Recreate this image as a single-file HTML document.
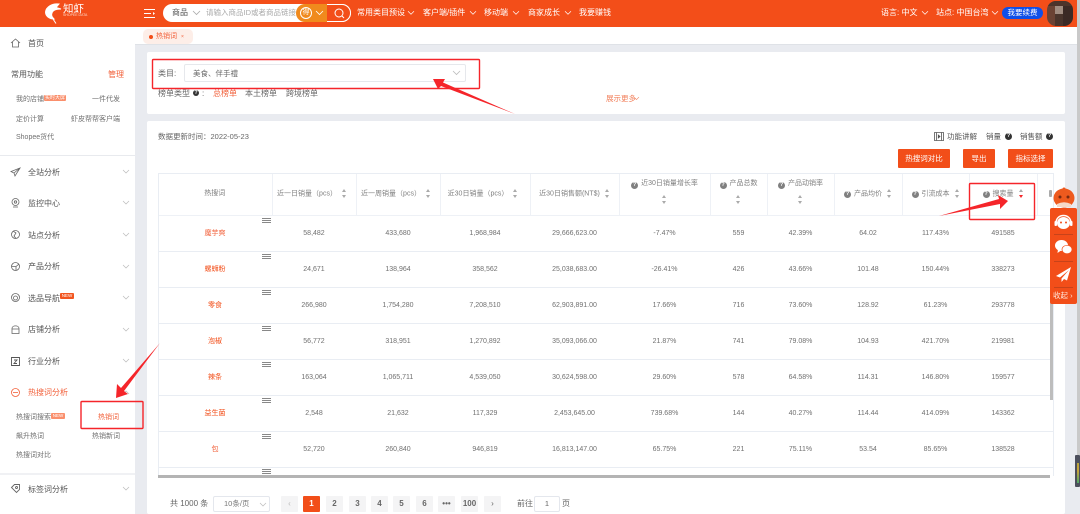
<!DOCTYPE html>
<html lang="zh-CN"><head><meta charset="utf-8"><title>热销词</title>
<style>
*{box-sizing:border-box}
html,body{margin:0;padding:0;width:1080px;height:514px;overflow:hidden;background:#fff}
body{position:relative;font-family:"Liberation Sans","Noto Sans CJK SC",sans-serif;font-size:7.5px;color:#555}
.a{position:absolute;white-space:nowrap;line-height:10px}
.b{position:absolute}
#wrap{position:absolute;left:0;top:0;width:1080px;height:514px;filter:blur(.3px)}
.h{color:#fff;top:8px;font-size:8px}
.m{left:28px;font-size:8px;color:#555}
.s{font-size:7px;color:#707070}
.o{color:#f24e19}
svg{position:absolute;overflow:visible}
.chev{fill:none;stroke:currentColor;stroke-width:.8}
table{position:absolute;left:158px;top:173px;width:895px;height:302px;border-collapse:collapse;table-layout:fixed;font-size:7px;color:#707070;text-align:center}
td,th{padding:0;font-weight:normal;line-height:10px}
th{height:42px;border-right:1px solid #eef1f6;border-bottom:1px solid #eef1f6;font-size:7px;color:#808080;white-space:nowrap}
th.p{padding-right:4px}
th.two{padding-bottom:4px}
th.two .sort{display:block;margin:6px auto 0}
td{height:36px;border-bottom:1px solid #e9edf3;padding-top:2px}
tr.e td{height:8px;border-bottom:0;padding:0}
td.k{color:#f24e19}
.sort{display:inline-block;width:5px;height:9px;margin-left:5px;vertical-align:middle;position:relative}
.sort:before,.sort:after{content:"";position:absolute;left:0;border-left:2.5px solid transparent;border-right:2.5px solid transparent}
.sort:before{top:0;border-bottom:3px solid #aaa}
.sort:after{bottom:0;border-top:3px solid #aaa}
.sort.r:after{border-top-color:#f5252a}
.q{display:inline-block;width:7px;height:7px;border-radius:50%;background:#808080;margin-right:3px;vertical-align:-.5px;color:#fff;font-size:5.5px;line-height:7px;font-style:normal;font-weight:bold;text-align:center}
.qd{position:absolute;width:7px;height:7px;border-radius:50%;background:#333;color:#fff;font-size:5.5px;line-height:7px;font-weight:bold;text-align:center}
.ham{position:absolute;left:262px;width:9px;height:5px;border-top:1px solid #888;border-bottom:1px solid #888}
.ham:after{content:"";position:absolute;left:0;right:0;top:1px;height:1px;background:#888}
.pg{position:absolute;top:496px;width:17px;height:16px;background:#f4f4f5;color:#666;font-size:8px;font-weight:bold;text-align:center;line-height:15px;border-radius:1px}
.btn{position:absolute;top:149px;height:19px;background:#f24e19;color:#fff;font-size:7.5px;text-align:center;line-height:19px;border-radius:1px}
</style></head>
<body><div id="wrap">

<!-- page bg -->
<div class="b" style="left:135px;top:27px;width:945px;height:487px;background:#e9ebf0"></div>
<div class="b" style="left:135px;top:27px;width:942px;height:18px;background:#fff;border-bottom:1px solid #dfe2e7"></div>
<div class="b" style="left:1077px;top:0;width:3px;height:455px;background:#c9c9c9"></div>

<!-- header -->
<div class="b" style="left:0;top:0;width:1077px;height:27px;background:#f34e19"></div>
<svg style="left:44px;top:2px" width="20" height="24" viewBox="0 0 20 24"><path d="M15 2C8 1 2 5 1.500 10C1.500 14 5 17 10 17C8 15 7 13 8 11C9 8 13 7 17 7L12 5.500L15 2ZM9 17L12 21.500" fill="#fff" stroke="#fff" stroke-width="1"/></svg>
<span class="a" style="left:63px;top:3px;color:#fff;font-size:10.500px;line-height:12px">知虾</span>
<span class="a" style="left:63px;top:13px;color:#ffd9c8;font-size:3.500px;line-height:4px">SHOPEE DATA</span>
<svg style="left:144px;top:9px" width="11" height="9" viewBox="0 0 11 9"><path d="M0 .5H11M0 4.500H7M0 8.500H11" stroke="#fff" stroke-width="1"/><path d="M9 3L11 4.500L9 6Z" fill="#fff"/></svg>
<div class="b" style="left:163px;top:4px;width:188px;height:18px;background:#fff;border-radius:9px"></div>
<span class="a" style="left:172px;top:8px;font-size:8px;color:#555">商品</span>
<svg class="chev" style="left:193px;top:11px;color:#aaa" width="7" height="4" viewBox="0 0 7 4"><path d="M0 0L3.500 3.500L7 0"/></svg>
<span class="a" style="left:206px;top:8px;font-size:7.500px;color:#aaa">请输入商品ID或者商品链接</span>
<div class="b" style="left:296px;top:4px;width:31px;height:18px;background:#f08a1d;border-radius:9px 0 0 9px"></div>
<div class="b" style="left:300px;top:7px;width:12px;height:12px;border:1px solid #fff;border-radius:50%;color:#fff;font-size:7px;line-height:10px;text-align:center">得</div>
<svg class="chev" style="left:316px;top:11px;color:#fff" width="7" height="4" viewBox="0 0 7 4"><path d="M0 0L3.500 3.500L7 0"/></svg>
<div class="b" style="left:327px;top:4px;width:24px;height:18px;background:#f34e19;border:1px solid #fff;border-left:0;border-radius:0 9px 9px 0"></div>
<svg style="left:334px;top:8px" width="11" height="11" viewBox="0 0 11 11" fill="none" stroke="#fff"><circle cx="5" cy="5" r="4"/><path d="M8 8L10 10"/></svg>
<span class="a h" style="left:357px">常用类目预设</span>
<svg class="chev" style="left:408px;top:11px;color:#fff" width="6" height="4" viewBox="0 0 7 4"><path d="M0 0L3.500 3.500L7 0"/></svg>
<span class="a h" style="left:423px">客户端/插件</span>
<svg class="chev" style="left:470px;top:11px;color:#fff" width="6" height="4" viewBox="0 0 7 4"><path d="M0 0L3.500 3.500L7 0"/></svg>
<span class="a h" style="left:484px">移动端</span>
<svg class="chev" style="left:513px;top:11px;color:#fff" width="6" height="4" viewBox="0 0 7 4"><path d="M0 0L3.500 3.500L7 0"/></svg>
<span class="a h" style="left:528px">商家成长</span>
<svg class="chev" style="left:565px;top:11px;color:#fff" width="6" height="4" viewBox="0 0 7 4"><path d="M0 0L3.500 3.500L7 0"/></svg>
<span class="a h" style="left:579px">我要赚钱</span>
<span class="a h" style="left:881px">语言: 中文</span>
<svg class="chev" style="left:922px;top:11px;color:#fff" width="6" height="4" viewBox="0 0 7 4"><path d="M0 0L3.500 3.500L7 0"/></svg>
<span class="a h" style="left:936px">站点: 中国台湾</span>
<svg class="chev" style="left:992px;top:11px;color:#fff" width="6" height="4" viewBox="0 0 7 4"><path d="M0 0L3.500 3.500L7 0"/></svg>
<div class="b" style="left:1002px;top:7px;width:41px;height:12px;background:#0f4fe8;border-radius:6px;color:#fff;font-size:7.500px;line-height:12px;text-align:center">我要续费</div>
<div class="b" style="left:1047px;top:1px;width:26px;height:25px;border-radius:9px;background:#6b4334;overflow:hidden">
<div class="b" style="left:8px;top:5px;width:8px;height:8px;background:#a08c80"></div>
<div class="b" style="left:8px;top:13px;width:8px;height:12px;background:#4a352c"></div>
<div class="b" style="left:16px;top:5px;width:10px;height:20px;background:#3b2a25"></div>
<div class="b" style="left:0;top:0;width:26px;height:5px;background:#4c342b"></div>
</div>

<!-- sidebar -->
<div class="b" style="left:0;top:27px;width:135px;height:487px;background:#fff"></div>
<div class="b" style="left:0;top:155px;width:135px;height:1px;background:#e8eaee"></div>
<div class="b" style="left:0;top:473px;width:135px;height:2px;background:#f0f1f4"></div>
<svg style="left:11px;top:39px" width="9" height="8" viewBox="0 0 9 8" fill="none" stroke="#666" stroke-width=".8"><path d="M0 4L4.500 0L9 4M1.500 3V8H7.500V3"/></svg>
<span class="a m" style="top:39px">首页</span>
<span class="a" style="left:11px;top:70px;font-size:8px;color:#555">常用功能</span>
<span class="a o" style="left:108px;top:70px;font-size:8px;color:#f2603a">管理</span>
<span class="a s" style="left:16px;top:95px">我的店铺</span><div class="b" style="left:44px;top:95px;width:22px;height:6px;background:#fa8f6c;border-radius:1px;color:#fff;font-size:5px;line-height:6px;text-align:center">实时大屏</div>
<span class="a s" style="left:92px;top:95px">一件代发</span>
<span class="a s" style="left:16px;top:115px">定价计算</span>
<span class="a s" style="left:71px;top:115px">虾皮帮帮客户端</span>
<span class="a s" style="left:16px;top:133px">Shopee货代</span>

<svg style="left:11px;top:168px" width="9" height="8" viewBox="0 0 9 8" fill="none" stroke="#666" stroke-width=".8"><path d="M9 0L0 3.500L3 5L4 8L9 0ZM3 5L9 0"/></svg>
<span class="a m" style="top:168px">全站分析</span>
<svg style="left:11px;top:198px" width="9" height="10" viewBox="0 0 9 10" fill="none" stroke="#666" stroke-width=".8"><circle cx="4.500" cy="4" r="3.500"/><circle cx="4.500" cy="4" r="1.200"/><path d="M2 9H7"/></svg>
<span class="a m" style="top:199px">监控中心</span>
<svg style="left:11px;top:230px" width="9" height="9" viewBox="0 0 9 9" fill="none" stroke="#666" stroke-width=".8"><circle cx="4.500" cy="4.500" r="4"/><path d="M2 1L5 3L3 6L5 8.500"/></svg>
<span class="a m" style="top:231px">站点分析</span>
<svg style="left:11px;top:262px" width="9" height="9" viewBox="0 0 9 9" fill="none" stroke="#666" stroke-width=".8"><circle cx="4.500" cy="4.500" r="4"/><path d="M.5 4.500H5L8 2M5 4.500V8.500"/></svg>
<span class="a m" style="top:262px">产品分析</span>
<svg style="left:11px;top:293px" width="9" height="9" viewBox="0 0 9 9" fill="none" stroke="#666" stroke-width=".8"><circle cx="4.500" cy="4.500" r="4"/><circle cx="4.500" cy="5" r="2"/></svg>
<span class="a m" style="top:294px">选品导航</span><div class="b" style="left:60px;top:293px;width:14px;height:6px;background:#f2551f;border-radius:1px;color:#fff;font-size:4.500px;line-height:6px;text-align:center">NEW</div>
<svg style="left:11px;top:325px" width="9" height="9" viewBox="0 0 9 9" fill="none" stroke="#666" stroke-width=".8"><path d="M1 3.500C1 0 8 0 8 3.500V8.500H1V3.500ZM1 4H8"/></svg>
<span class="a m" style="top:325px">店铺分析</span>
<svg style="left:11px;top:357px" width="9" height="9" viewBox="0 0 9 9" fill="none" stroke="#555" stroke-width=".9"><path d="M.5.5H8.500V8.500H.5ZM3 3H6L3 6.500H6"/></svg>
<span class="a m" style="top:357px">行业分析</span>
<svg style="left:11px;top:388px" width="9" height="9" viewBox="0 0 9 9" fill="none" stroke="#f2603a" stroke-width=".8"><circle cx="4.500" cy="4.500" r="4"/><path d="M2 4.500H7"/></svg>
<span class="a m o" style="top:388px;color:#f2603a">热搜词分析</span>
<span class="a s" style="left:16px;top:413px">热搜词搜索</span><div class="b" style="left:51px;top:413px;width:14px;height:6px;background:#fa8f6c;border-radius:1px;color:#fff;font-size:4.500px;line-height:6px;text-align:center">NEW</div>
<span class="a s" style="left:98px;top:413px;color:#f2603a">热销词</span>
<span class="a s" style="left:16px;top:432px">飙升热词</span>
<span class="a s" style="left:92px;top:432px">热销新词</span>
<span class="a s" style="left:16px;top:451px">热搜词对比</span>
<svg style="left:11px;top:484px" width="9" height="9" viewBox="0 0 9 9" fill="none" stroke="#666" stroke-width=".9"><path d="M.5 3.500L3.500.5H8.500V5.500L5.500 8.500Z"/><circle cx="5.500" cy="3.500" r="1"/></svg>
<span class="a m" style="top:485px">标签词分析</span>
<svg class="chev" style="left:123px;top:170px;color:#bbb" width="6" height="3.500" viewBox="0 0 7 4"><path d="M0 0L3.500 3.500L7 0"/></svg>
<svg class="chev" style="left:123px;top:201px;color:#bbb" width="6" height="3.500" viewBox="0 0 7 4"><path d="M0 0L3.500 3.500L7 0"/></svg>
<svg class="chev" style="left:123px;top:233px;color:#bbb" width="6" height="3.500" viewBox="0 0 7 4"><path d="M0 0L3.500 3.500L7 0"/></svg>
<svg class="chev" style="left:123px;top:265px;color:#bbb" width="6" height="3.500" viewBox="0 0 7 4"><path d="M0 0L3.500 3.500L7 0"/></svg>
<svg class="chev" style="left:123px;top:296px;color:#bbb" width="6" height="3.500" viewBox="0 0 7 4"><path d="M0 0L3.500 3.500L7 0"/></svg>
<svg class="chev" style="left:123px;top:328px;color:#bbb" width="6" height="3.500" viewBox="0 0 7 4"><path d="M0 0L3.500 3.500L7 0"/></svg>
<svg class="chev" style="left:123px;top:359px;color:#bbb" width="6" height="3.500" viewBox="0 0 7 4"><path d="M0 0L3.500 3.500L7 0"/></svg>
<svg class="chev" style="left:123px;top:391px;color:#bbb" width="6" height="3.500" viewBox="0 0 7 4"><path d="M0 3.500L3.500 0L7 3.500"/></svg>
<svg class="chev" style="left:123px;top:487px;color:#bbb" width="6" height="3.500" viewBox="0 0 7 4"><path d="M0 0L3.500 3.500L7 0"/></svg>

<!-- tab -->
<div class="b" style="left:143px;top:29px;width:50px;height:15px;background:#fdeee8;border-radius:5px"></div>
<div class="b" style="left:149px;top:35px;width:4px;height:4px;background:#f24e19;border-radius:50%"></div>
<span class="a" style="left:156px;top:32px;font-size:7px;color:#f2603a">热销词</span>
<span class="a" style="left:181px;top:32px;font-size:5px;color:#f2603a">×</span>

<!-- card 1 -->
<div class="b" style="left:147px;top:52px;width:918px;height:62px;background:#fff;border-radius:2px"></div>
<span class="a" style="left:158px;top:69px;font-size:8px;color:#666">类目:</span>
<div class="b" style="left:184px;top:64px;width:282px;height:18px;border:1px solid #e6e8ec;border-radius:2px"></div>
<span class="a" style="left:193px;top:69px;font-size:7.500px;color:#666">美食、伴手禮</span>
<svg class="chev" style="left:453px;top:71px;color:#bbb" width="7" height="4" viewBox="0 0 7 4"><path d="M0 0L3.500 3.500L7 0"/></svg>
<span class="a" style="left:158px;top:89px;font-size:8px;color:#666">榜单类型</span>
<div class="qd" style="left:193px;top:90px;width:6px;height:6px;line-height:6px;font-size:5px">?</div>
<span class="a" style="left:202px;top:89px;font-size:8px;color:#666">:</span>
<span class="a" style="left:213px;top:89px;font-size:8px;color:#f2603a">总榜单</span>
<span class="a" style="left:245px;top:89px;font-size:8px;color:#666">本土榜单</span>
<span class="a" style="left:286px;top:89px;font-size:8px;color:#666">跨境榜单</span>
<span class="a" style="left:606px;top:94px;font-size:7.500px;color:#f2805c">展示更多</span>
<svg class="chev" style="left:634px;top:97px;color:#f2805c" width="5" height="3" viewBox="0 0 7 4"><path d="M0 0L3.500 3.500L7 0"/></svg>

<!-- card 2 -->
<div class="b" style="left:147px;top:121px;width:918px;height:393px;background:#fff;border-radius:2px"></div>
<span class="a" style="left:158px;top:132px;font-size:7.500px;color:#666">数据更新时间：2022-05-23</span>
<svg style="left:934px;top:132px" width="10" height="9" viewBox="0 0 10 9" fill="none" stroke="#555" stroke-width=".8"><path d="M.5.5H9.500V8.500H.5ZM2.500.5V8.500M7.500.5V8.500"/><path d="M4.300 3L6 4.500L4.300 6Z" fill="#555"/></svg>
<span class="a" style="left:947px;top:132px;font-size:7.500px;color:#555">功能讲解</span>
<span class="a" style="left:986px;top:132px;font-size:7.500px;color:#555">销量</span>
<div class="qd" style="left:1005px;top:133px">?</div>
<span class="a" style="left:1020px;top:132px;font-size:7.500px;color:#555">销售额</span>
<div class="qd" style="left:1046px;top:133px">?</div>
<div class="btn" style="left:898px;width:52px">热搜词对比</div>
<div class="btn" style="left:963px;width:32px">导出</div>
<div class="btn" style="left:1008px;width:45px">指标选择</div>

<!-- table -->
<table>
<colgroup><col style="width:114px"><col style="width:84px"><col style="width:84px"><col style="width:90px"><col style="width:89px"><col style="width:91px"><col style="width:57px"><col style="width:67px"><col style="width:68px"><col style="width:67px"><col style="width:68px"><col style="width:16px"></colgroup>
<thead><tr>
<th>热搜词</th>
<th class="p">近一日销量（pcs）<i class="sort"></i></th>
<th class="p">近一周销量（pcs）<i class="sort"></i></th>
<th class="p">近30日销量（pcs）<i class="sort"></i></th>
<th>近30日销售额(NT$)<i class="sort"></i></th>
<th class="two"><i class="q">?</i>近30日销量增长率<i class="sort"></i></th>
<th class="two"><i class="q">?</i>产品总数<i class="sort"></i></th>
<th class="two"><i class="q">?</i>产品动销率<i class="sort"></i></th>
<th><i class="q">?</i>产品均价<i class="sort"></i></th>
<th><i class="q">?</i>引流成本<i class="sort"></i></th>
<th><i class="q">?</i>搜索量<i class="sort r"></i></th>
<th style="border-right:0"></th>
</tr></thead>
<tbody>
<tr><td class="k" style="color:#f2603a">魔芋爽</td><td>58,482</td><td>433,680</td><td>1,968,984</td><td>29,666,623.00</td><td>-7.47%</td><td>559</td><td>42.39%</td><td>64.02</td><td>117.43%</td><td>491585</td><td></td></tr>
<tr><td class="k">螺蛳粉</td><td>24,671</td><td>138,964</td><td>358,562</td><td>25,038,683.00</td><td>-26.41%</td><td>426</td><td>43.66%</td><td>101.48</td><td>150.44%</td><td>338273</td><td></td></tr>
<tr><td class="k">零食</td><td>266,980</td><td>1,754,280</td><td>7,208,510</td><td>62,903,891.00</td><td>17.66%</td><td>716</td><td>73.60%</td><td>128.92</td><td>61.23%</td><td>293778</td><td></td></tr>
<tr><td class="k">泡椒</td><td>56,772</td><td>318,951</td><td>1,270,892</td><td>35,093,066.00</td><td>21.87%</td><td>741</td><td>79.08%</td><td>104.93</td><td>421.70%</td><td>219981</td><td></td></tr>
<tr><td class="k">辣条</td><td>163,064</td><td>1,065,711</td><td>4,539,050</td><td>30,624,598.00</td><td>29.60%</td><td>578</td><td>64.58%</td><td>114.31</td><td>146.80%</td><td>159577</td><td></td></tr>
<tr><td class="k">益生菌</td><td>2,548</td><td>21,632</td><td>117,329</td><td>2,453,645.00</td><td>739.68%</td><td>144</td><td>40.27%</td><td>114.44</td><td>414.09%</td><td>143362</td><td></td></tr>
<tr><td class="k" style="color:#f2603a">包</td><td>52,720</td><td>260,840</td><td>946,819</td><td>16,813,147.00</td><td>65.75%</td><td>221</td><td>75.11%</td><td>53.54</td><td>85.65%</td><td>138528</td><td></td></tr>
<tr class="e"><td colspan="12"></td></tr>
</tbody>
</table>
<div class="b" style="left:158px;top:173px;width:1px;height:302px;background:#e9edf3"></div>
<div class="b" style="left:158px;top:173px;width:895px;height:1px;background:#e9edf3"></div>
<div class="b" style="left:1053px;top:173px;width:1px;height:303px;background:#e9edf3"></div>
<div class="b" style="left:158px;top:475px;width:892px;height:3px;background:#b4b4b4"></div>
<div class="b" style="left:1050px;top:215px;width:3px;height:185px;background:#bdbdbd"></div>
<div class="b" style="left:1049px;top:190px;width:3px;height:7px;background:#aaa;border-radius:1px"></div>
<div class="ham" style="top:218px"></div><div class="ham" style="top:254px"></div><div class="ham" style="top:290px"></div><div class="ham" style="top:326px"></div><div class="ham" style="top:362px"></div><div class="ham" style="top:398px"></div><div class="ham" style="top:434px"></div><div class="ham" style="top:469px"></div>

<!-- pagination -->
<span class="a" style="left:170px;top:499px;font-size:8px;color:#666">共 1000 条</span>
<div class="b" style="left:213px;top:496px;width:57px;height:16px;border:1px solid #e4e7ed;border-radius:2px"></div>
<span class="a" style="left:224px;top:499px;font-size:7.500px;color:#777">10条/页</span>
<svg class="chev" style="left:260px;top:503px;color:#bbb" width="6" height="3.500" viewBox="0 0 7 4"><path d="M0 0L3.500 3.500L7 0"/></svg>
<div class="pg" style="left:281px;color:#bbb;font-weight:normal">‹</div>
<div class="pg" style="left:303px;background:#f24e19;color:#fff">1</div>
<div class="pg" style="left:326px">2</div>
<div class="pg" style="left:349px">3</div>
<div class="pg" style="left:371px">4</div>
<div class="pg" style="left:393px">5</div>
<div class="pg" style="left:416px">6</div>
<div class="pg" style="left:438px">•••</div>
<div class="pg" style="left:461px">100</div>
<div class="pg" style="left:484px;font-weight:normal">›</div>
<span class="a" style="left:517px;top:499px;font-size:8px;color:#666">前往</span>
<div class="b" style="left:534px;top:496px;width:26px;height:16px;border:1px solid #e4e7ed;border-radius:2px;text-align:center;font-size:7.500px;line-height:14px;color:#666">1</div>
<span class="a" style="left:562px;top:499px;font-size:8px;color:#666">页</span>

<!-- red annotations -->
<svg style="left:0;top:0" width="1080" height="514" viewBox="0 0 1080 514">
<g fill="none" stroke="#f5252a" stroke-width="1.400">
<rect x="152.500" y="59.500" width="327" height="29" rx="1"/>
<rect x="969.500" y="183.500" width="65" height="36" rx="1"/>
<rect x="81" y="401.500" width="62" height="27" rx="1"/>
</g>
<polygon fill="#f5252a" points="433,79 445,79 443,82.500 515,114 441,86 438,89"/>
<polygon fill="#f5252a" points="1008,201 998,195 999,199 939,216 1000,204 1000,209"/>
<polygon fill="#f5252a" points="116,398 117,384 121,388 160,343 124,391 128,394"/>
</svg>

<!-- right float -->
<svg style="left:1053px;top:187px" width="24" height="22" viewBox="0 0 24 22"><circle cx="11" cy="2" r="1.500" fill="#e8521c"/><ellipse cx="11" cy="11" rx="10.500" ry="9.500" fill="#ee5a1e"/><path d="M4 17Q11 13.500 18 17V20H4Z" fill="#f6d9c8"/><circle cx="7" cy="10" r="1.500" fill="#7a2a10"/><circle cx="15" cy="10" r="1.500" fill="#7a2a10"/></svg>
<div class="b" style="left:1050px;top:208px;width:27px;height:96px;background:#f24e19;border-radius:2px"></div>
<svg style="left:1054px;top:214px" width="19" height="16" viewBox="0 0 19 16"><ellipse cx="9.500" cy="9" rx="6.500" ry="6" fill="#fff"/><path d="M2 9C2 -1 17 -1 17 9" fill="none" stroke="#fff" stroke-width="1.500"/><rect x=".5" y="7" width="2.500" height="5" rx="1" fill="#fff"/><rect x="16" y="7" width="2.500" height="5" rx="1" fill="#fff"/><circle cx="7" cy="8.500" r="1" fill="#f24e19"/><circle cx="12" cy="8.500" r="1" fill="#f24e19"/></svg>
<div class="b" style="left:1054px;top:234px;width:19px;height:1px;background:#c7431a"></div>
<svg style="left:1055px;top:240px" width="17" height="15" viewBox="0 0 17 15"><ellipse cx="6.500" cy="5.500" rx="6.500" ry="5.500" fill="#fff"/><ellipse cx="12" cy="9.500" rx="5" ry="4.200" fill="#fff" stroke="#f24e19" stroke-width=".7"/><path d="M3 9L2.500 13L6 10.500Z" fill="#fff"/></svg>
<div class="b" style="left:1054px;top:261px;width:19px;height:1px;background:#c7431a"></div>
<svg style="left:1056px;top:267px" width="15" height="15" viewBox="0 0 15 15"><path d="M15 0L0 9L4 10.500L13 3L5.500 11.500V15L8 12L11 13.500Z" fill="#fff"/></svg>
<div class="b" style="left:1054px;top:287px;width:19px;height:1px;background:#c7431a"></div>
<span class="a" style="left:1053px;top:291px;color:#ffe7dc;font-size:7.500px">收起 ›</span>

<!-- bottom right widget -->
<div class="b" style="left:1075px;top:455px;width:5px;height:32px;background:#4c4f5c;border-radius:1px"></div>
<div class="b" style="left:1077px;top:463px;width:2px;height:20px;background:linear-gradient(#b8a33a,#c9a43c 40%,#4fa868)"></div>

</div></body></html>
